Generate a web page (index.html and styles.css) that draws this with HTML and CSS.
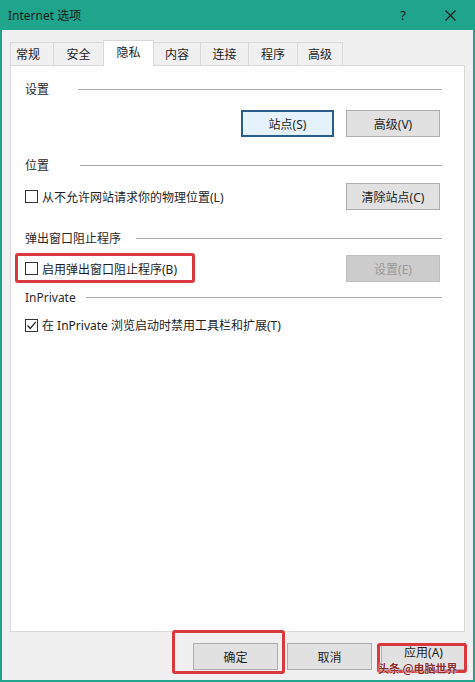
FILE: index.html
```html
<!DOCTYPE html>
<html lang="zh-CN">
<head>
<meta charset="utf-8">
<title>Internet 选项</title>
<link rel="stylesheet" href="styles.css">
</head>
<body>
<div class="window">
  <div class="titlebar">
    <span class="title">Internet 选项</span>
    <span class="tb-help">?</span>
    <span class="tb-close">
      <svg width="11" height="11" viewBox="0 0 11 11"><path d="M0.5 0.5L10.5 10.5M10.5 0.5L0.5 10.5" stroke="#1b1b1b" stroke-width="1.1" fill="none"/></svg>
    </span>
  </div>
  <div class="main">
    <div class="tabs">
      <div class="tab t1">常规</div>
      <div class="tab t2">安全</div>
      <div class="tab t3 active">隐私</div>
      <div class="tab t4">内容</div>
      <div class="tab t5">连接</div>
      <div class="tab t6">程序</div>
      <div class="tab t7">高级</div>
    </div>
    <div class="panel">
      <div class="group-head">
        <span class="glabel">设置</span><span class="gline wide"></span>
      </div>
      <div class="row row-end r1">
        <button class="btn default">站点(S)</button>
        <button class="btn">高级(V)</button>
      </div>

      <div class="group-head g2">
        <span class="glabel">位置</span><span class="gline wide2"></span>
      </div>
      <div class="row r2">
        <label class="check"><span class="box"></span><span>从不允许网站请求你的物理位置(L)</span></label>
        <button class="btn">清除站点(C)</button>
      </div>

      <div class="group-head g3">
        <span class="glabel">弹出窗口阻止程序</span><span class="gline mid"></span>
      </div>
      <div class="row r3">
        <label class="check"><span class="box"></span><span>启用弹出窗口阻止程序(B)</span></label>
        <button class="btn disabled">设置(E)</button>
      </div>

      <div class="group-head g4">
        <span class="glabel">InPrivate</span><span class="gline"></span>
      </div>
      <div class="row r4">
        <label class="check"><span class="box checked"><svg width="11" height="11" viewBox="0 0 11 11"><path d="M1.5 5.5L4.3 8.5L9.8 1.8" stroke="#222" stroke-width="1.2" fill="none"/></svg></span><span>在 InPrivate 浏览启动时禁用工具栏和扩展(T)</span></label>
      </div>
    </div>
    <div class="footer">
      <button class="btn fbtn">确定</button>
      <button class="btn fbtn">取消</button>
      <button class="btn fbtn apply"><span class="apply-label">应用(A)</span></button>
    </div>
  </div>
  <div class="mark m1"></div>
  <div class="mark m2"></div>
  <div class="mark m3"></div>
  <div class="watermark">头条 @电脑世界</div>
</div>
</body>
</html>
```

FILE: styles.css
```css
* { box-sizing: border-box; }
html, body { margin: 0; padding: 0; }
body {
  width: 475px;
  height: 682px;
  overflow: hidden;
  background: #f0f0f0;
  font-family: "Noto Sans", "Noto Sans CJK SC", sans-serif;
  font-size: 12px;
  color: #1e1e1e;
}
.window {
  position: relative;
  width: 475px;
  height: 682px;
  background: #f0f0f0;
  border: 2px solid #1fa58c;
  border-top: none;
  display: flex;
  flex-direction: column;
}
.titlebar {
  height: 30px;
  margin: 0 -2px;
  background: #1fa58c;
  display: flex;
  align-items: center;
  padding: 0 0 0 8px;
  flex: none;
}
.title { font-size: 12px; color: #1b1b1b; }
.tb-help { margin-left: auto; width: 46px; text-align: center; font-size: 13px; color: #1b1b1b; padding-right: 6px; }
.tb-close { width: 46px; display: flex; justify-content: center; align-items: center; padding-right: 4px; }
.main {
  flex: 1;
  display: flex;
  flex-direction: column;
  padding: 10px 8px 0 8px;
}
.tabs {
  display: flex;
  align-items: flex-end;
}
.tab {
  height: 23px;
  border: 1px solid #d9d9d9;
  border-bottom: none;
  margin-right: -1px;
  background: #f0f0f0;
  display: flex;
  align-items: center;
  justify-content: center;
  font-size: 12px;
  color: #1e1e1e;
}
.tab.active {
  height: 26px;
  background: #ffffff;
  margin-bottom: -1px;
  position: relative;
  z-index: 1;
  padding-bottom: 3px;
}
.t1 { width: 44px; justify-content: flex-start; padding-left: 5px; }
.t2 { width: 51px; }
.t3 { width: 51px; }
.t4 { width: 48px; }
.t5 { width: 49px; }
.t6 { width: 50px; }
.t7 { width: 46px; }
.panel {
  height: 567px;
  background: #ffffff;
  border: 1px solid #d9d9d9;
  padding: 15px 22px 0 14px;
  flex: none;
}
.group-head {
  display: flex;
  align-items: center;
  height: 16px;
}
.glabel { color: #2a2a2a; white-space: nowrap; }
.gline {
  flex: 1;
  height: 1px;
  background: #a9a9a9;
  margin-left: 10px;
}
.gline.wide { margin-left: 29px; }
.gline.wide2 { margin-left: 31px; }
.gline.mid { margin-left: 15px; }
.row {
  display: flex;
  align-items: center;
  justify-content: space-between;
}
.row-end { justify-content: flex-end; gap: 12px; }
.r1 { margin-top: 13px; }
.g2 { margin-top: 20px; }
.r2 { margin-top: 10px; }
.g3 { margin-top: 20px; }
.r3 { margin-top: 9px; }
.g4 { margin-top: 7px; }
.r4 { margin-top: 11px; height: 18px; }
.check {
  display: flex;
  align-items: center;
  gap: 4px;
  color: #1e1e1e;
}
.box {
  width: 13px;
  height: 13px;
  border: 1px solid #333333;
  background: #ffffff;
  display: flex;
  align-items: center;
  justify-content: center;
}
.btn {
  font-family: "Noto Sans", "Noto Sans CJK SC", sans-serif;
  font-size: 12px;
  color: #1e1e1e;
  width: 94px;
  height: 27px;
  background: #e1e1e1;
  border: 1px solid #adadad;
  margin: 0 2px 0 0;
  padding: 0;
}
.row-end .btn:first-child { margin-right: 0; }
.btn.default {
  background: #e5f1fb;
  border: 2px solid #2b5d8c;
  width: 93px;
}
.btn.disabled {
  background: #cccccc;
  border-color: #bfbfbf;
  color: #9a9a9a;
}
.footer {
  display: flex;
  justify-content: flex-end;
  gap: 9px;
  margin-top: 11px;
  margin-right: -1px;
}
.fbtn { width: 85px; height: 27px; margin: 0; }
.fbtn.apply {
  display: flex;
  align-items: flex-start;
  justify-content: center;
  padding-top: 2px;
}
.apply-label { display: block; line-height: 14px; }
.mark {
  position: absolute;
  border: 3px solid #d9393e;
  border-radius: 3px;
  z-index: 2;
}
.m1 { left: 13px; top: 253px; width: 180px; height: 30px; }
.m2 { left: 170px; top: 630px; width: 113px; height: 44px; }
.m3 { left: 375px; top: 643px; width: 90px; height: 30px; }
.watermark {
  position: absolute;
  left: 376px;
  top: 662px;
  z-index: 3;
  font-family: "Noto Sans CJK SC", sans-serif;
  font-size: 11px;
  font-weight: 700;
  color: #8a2b2b;
  text-shadow: 0 0 2px #ffffff, 0 0 1px #ffffff;
  white-space: nowrap;
  line-height: 12px;
}
```
